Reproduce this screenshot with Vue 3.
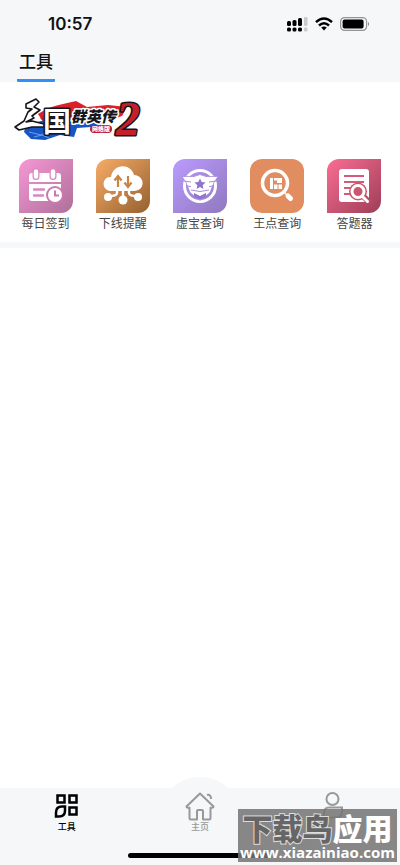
<script setup>
import { ref } from 'vue';

const tools = [
    { id: 'sign', label: '每日签到' },
    { id: 'cloud', label: '下线提醒' },
    { id: 'hero', label: '虚宝查询' },
    { id: 'point', label: '王点查询' },
    { id: 'quiz', label: '答题器' }
];

const tabs = [
    { id: 'tools', label: '工具' },
    { id: 'home', label: '主页' },
    { id: 'mine', label: '' }
];

const activeTab = ref('tools');
</script>

<template>
    <div class="page">
        <header class="header">
            <div class="status">
                <span class="status__time">10:57</span>
                <div class="status__icons">
                    <svg width="21" height="15" viewBox="0 0 21 15">
                        <g fill="#000">
                            <rect x="0" y="4" width="4" height="5" rx="1.5" />
                            <rect x="5.5" y="3" width="4" height="6" rx="1.5" />
                            <rect x="11" y="1" width="4" height="8" rx="1.5" />
                            <rect x="0" y="10.5" width="4" height="4" rx="1.5" />
                            <rect x="5.5" y="10.5" width="4" height="4" rx="1.5" />
                            <rect x="11" y="10.5" width="4" height="4" rx="1.5" />
                        </g>
                        <g fill="#c8cacb">
                            <rect x="17" y="0" width="3.5" height="9" rx="1.2" />
                            <rect x="17" y="10.5" width="3.5" height="4" rx="1.2" />
                        </g>
                    </svg>
                    <svg width="18" height="14" viewBox="0 0 18 14" fill="none" stroke="#000" stroke-width="2.5">
                        <path d="M1 5.2Q9-2.2 17 5.2" />
                        <path d="M4 8.5Q9 4 14 8.5" />
                        <path d="M6.2 10.6Q9 8.4 11.8 10.6L9 13.4Z" fill="#000" stroke="none" />
                    </svg>
                    <svg width="30" height="14" viewBox="0 0 30 14">
                        <rect x=".6" y=".6" width="26" height="12.8" rx="4" fill="none" stroke="#939596" stroke-width="1.2" />
                        <rect x="2.6" y="2.5" width="21" height="9" rx="2" />
                        <path d="M28 5Q30 7 28 9Z" fill="#777" />
                    </svg>
                </div>
            </div>
            <h1 class="title">工具</h1>
        </header>

        <main class="main">
            <section class="panel">
                <svg class="logo" viewBox="0 0 130 46" role="img" aria-label="三国群英传2">
                    <path d="M24 18Q36 10 49 8L62 5 73 11 94 9 113 11 108 20 96 24 82 22 70 29 58 24 42 22 30 27Z" fill="#dc2029" />
                    <path d="M12 29L31 24 60 26 83 23 91 27 77 31 63 32 60 41 46 39 31 44 17 43 10 36Z" fill="#1755c6" />
                    <path d="M26 22L35 17 45 19 30 26ZM64 11l16 5 12-5-8 10-14-1Z" fill="#a81b2d" opacity=".7" />
                    <path d="M15 36l12 3 7-3M20 41l8-2 7 3M63 28l13-4" fill="none" stroke="#6aa0ed" />
                    <path
                        d="M12 8L22 3 25 6 20 11 26 14 18 20 20 22 12 26 18 25 30 28 30 31 18 31 5 34 1 31 10 25 14 16 18 13 12 12Z"
                        fill="#fff"
                        stroke="#15151a"
                        stroke-width="1.600"
                        stroke-linejoin="round"
                    />
                    <rect x="76" y="29" width="22" height="8" rx="4" fill="#bd1d2b" />
                    <g stroke-linejoin="round">
                        <text class="logo__guo" x="29" y="36">国</text>
                        <text class="logo__small" x="57" y="26">群</text>
                        <text class="logo__small" x="72" y="26">英</text>
                        <text class="logo__small" x="87" y="26">传</text>
                        <text class="logo__two" x="102" y="39">2</text>
                    </g>
                    <text class="logo__badge" x="87" y="35">网络版</text>
                </svg>

                <nav class="tools">
                    <button v-for="tool in tools" :key="tool.id" class="tool" type="button">
                        <span class="tool__icon" :class="`tool__icon--${tool.id}`">
                            <svg v-if="tool.id === 'sign'" viewBox="0 0 54 54">
                                <path d="M13 14h26q3 0 3 3v6H10v-6q0-3 3-3ZM10 25h32v14q0 3-3 3H13q-3 0-3-3Z" fill="#fff" />
                                <g stroke="#d987be" stroke-linecap="round" fill="none">
                                    <path d="M17 12.500v5M34 12.500v5" stroke-width="7" />
                                    <path d="M17 12.500v5M34 12.500v5" stroke="#fff" stroke-width="4.500" />
                                    <path d="M15 30.500h10M15 36.500h9" stroke-width="2.400" />
                                </g>
                                <circle cx="36" cy="36" r="9" fill="#c979ad" />
                                <circle cx="36" cy="36" r="7" fill="#fff" />
                                <path d="M36 31.500v5h4" fill="none" stroke="#c979ad" stroke-width="2" />
                            </svg>
                            <svg v-else-if="tool.id === 'cloud'" viewBox="0 0 54 54">
                                <path d="M16 32C4 32 6 17 15 18C17 4 35 4 38 16C50 17 49 32 38 32Z" fill="#fff" />
                                <path d="M22 28V18M18.500 21.500L22 17l3.500 4.500M32 17v10M28.500 23.500L32 28l3.500-4.500" fill="none" stroke="#c98344" stroke-width="2.200" />
                                <path d="M21 31v3q0 3-8 3M27 31v10M33 31v3q0 3 8 3" fill="none" stroke="#fff" stroke-width="2.400" />
                                <g fill="#fff">
                                    <circle cx="12" cy="38" r="4" />
                                    <circle cx="27" cy="41" r="4.500" />
                                    <circle cx="42" cy="38" r="4" />
                                </g>
                            </svg>
                            <svg v-else-if="tool.id === 'hero'" viewBox="0 0 54 54">
                                <circle cx="27" cy="27" r="15.500" fill="none" stroke="#fff" stroke-width="3" />
                                <path d="M9 17.500h12l6-2 6 2h12l-4 6-2 5-2 5-10 8-10-8-2-5-2-5Z" fill="#fff" stroke="#a68bdf" stroke-width=".8" />
                                <path d="M27 19.500l1.700 3.500 3.800.500-2.800 2.700.700 3.800-3.400-1.900-3.400 1.900.700-3.800-2.800-2.700 3.800-.500Z" fill="#8e74d0" />
                                <path d="M11 22l7 1M13 27l5 .500M43 22l-7 1M41 27l-5 .500M18 31q9 3 18 0" fill="none" stroke="#a68bdf" />
                                <path d="M21 34l6 3 6-3v3.500l-6 3.500-6-3.500Z" fill="#9275cc" />
                            </svg>
                            <svg v-else-if="tool.id === 'point'" viewBox="0 0 54 54">
                                <circle cx="25" cy="24" r="12.500" fill="none" stroke="#fff" stroke-width="3.500" />
                                <path d="M34 33l3 3" stroke="#fff" stroke-width="1.500" />
                                <path d="M38 37l2.500 2.500" stroke="#fff" stroke-width="5" stroke-linecap="round" />
                                <path d="M20 19h3v11h-3ZM24 19h8v5h-8ZM24 25.500h3.500V30H24ZM28.500 25.500H32V30h-3.500Z" fill="#fff" />
                                <path d="M24 21.500h3v3h-3Z" fill="#e18d5f" />
                            </svg>
                            <svg v-else viewBox="0 0 54 54">
                                <rect x="12" y="10" width="30" height="33" rx="3" fill="#fff" />
                                <path d="M17 17h20M17 23h20M17 29h7M17 35h6" stroke="#d35a78" stroke-width="2.200" />
                                <path d="M36 37l7 7" stroke="#bd4a67" stroke-width="6" />
                                <circle cx="31" cy="32.500" r="9" fill="#c95571" />
                                <circle cx="31" cy="32.500" r="6" fill="none" stroke="#fff" stroke-width="3" />
                                <path d="M35 37l5.500 5.500" stroke="#fff" stroke-width="3" stroke-linecap="round" />
                            </svg>
                        </span>
                        <span class="tool__label">{{ tool.label }}</span>
                    </button>
                </nav>
            </section>
        </main>

        <nav class="tabbar">
            <button
                v-for="tab in tabs"
                :key="tab.id"
                class="tab"
                :class="[`tab--${tab.id}`, { 'tab--active': activeTab === tab.id }]"
                type="button"
                :aria-label="tab.label || tab.id"
                @click="activeTab = tab.id"
            >
                <svg v-if="tab.id === 'tools'" class="tab__icon" viewBox="0 0 30 30" fill="none" stroke="currentColor" stroke-width="2.500">
                    <path d="M5.500 4.500h7v7h-7ZM17.500 4.500h7v7h-7ZM17.500 16.500h7v7h-7Z" />
                    <path d="M13 15.500v4q0 6-6 6H4v-4q0-6 6-6Z" />
                </svg>
                <svg v-else-if="tab.id === 'home'" class="tab__icon" viewBox="0 0 30 30" fill="none" stroke="currentColor" stroke-width="2" stroke-linejoin="round">
                    <path d="M15 2.500L1.500 15.500q0 1.500 3 1.200V27q0 1.500 1.500 1.500h6V20q0-1 1-1h4q1 0 1 1v8.500h6q1.500 0 1.500-1.500V16.700q3 .3 3-1.200Z" />
                    <path d="M22 4q4-1 4 4" />
                </svg>
                <svg v-else class="tab__icon" viewBox="0 0 30 30" fill="none" stroke="currentColor" stroke-width="2">
                    <circle cx="14.500" cy="8" r="6" />
                    <path d="M11 16.500h13v4q0 6-6 6H6v-4q0-6 5-6Z" />
                </svg>
                <span v-if="tab.label" class="tab__label">{{ tab.label }}</span>
            </button>
            <span class="home-indicator"></span>
        </nav>

        <div class="watermark">
            <div class="watermark__name"><span class="watermark__dark">下载鸟</span>应用</div>
            <div class="watermark__url">www.xiazainiao.com</div>
        </div>
    </div>
</template>

<style>
body {
    background: #fff;
}
</style>

<style scoped>
.page {
    position: relative;
    display: flex;
    flex-direction: column;
    min-height: 100vh;
    font-family: Inter, 'Noto Sans CJK SC', sans-serif;
    color: #111;
}

button {
    padding: 0;
    border: none;
    background: none;
    font-family: inherit;
    color: inherit;
    cursor: pointer;
}

.header {
    background: #f5f7f9;
}
.status {
    display: flex;
    justify-content: space-between;
    align-items: center;
    height: 48px;
    padding: 0 30px 0 48px;
}
.status__time {
    font-size: 17px;
    font-weight: 600;
}
.status__icons {
    display: flex;
    align-items: center;
    gap: 7px;
}
.title {
    display: inline-block;
    margin: 0 0 0 17px;
    padding: 0 2px 3px;
    border-bottom: 3px solid #3090f8;
    border-radius: 1px;
    font-size: 17px;
    font-weight: 500;
    line-height: 28px;
    vertical-align: top;
}

.main {
    flex: 1;
}
.panel {
    padding: 14px 7px 9px;
    border-bottom: 6px solid #f6f8fa;
}
.logo {
    display: block;
    width: 130px;
    height: 46px;
    margin-left: 7px;
    overflow: visible;
}
.logo text {
    font-family: 'Noto Sans CJK SC', sans-serif;
    font-weight: 900;
    paint-order: stroke;
    stroke: #15151a;
    fill: #fff;
}
.logo .logo__guo {
    font-size: 28px;
    font-weight: 700;
    stroke-width: 3px;
}
.logo .logo__small {
    font-size: 15px;
    font-style: italic;
    fill: #15151a;
    stroke: #fff;
    stroke-width: 3px;
}
.logo .logo__two {
    font-family: 'Liberation Serif', serif;
    font-size: 48px;
    font-style: italic;
    fill: #c4202b;
    stroke: #15151a;
    stroke-width: 3px;
}
.logo .logo__badge {
    font-size: 6px;
    text-anchor: middle;
    stroke: none;
}

.tools {
    display: grid;
    grid-template-columns: repeat(5, 1fr);
    margin-top: 17px;
}
.tool {
    display: flex;
    flex-direction: column;
    align-items: center;
    gap: 2px;
}
.tool__icon {
    width: 54px;
    height: 54px;
    overflow: hidden;
    border-radius: 12px 0;
}
.tool__icon svg {
    display: block;
}
.tool__icon--sign {
    background: linear-gradient(135deg, #f797d5, #ad7099);
}
.tool__icon--cloud {
    background: linear-gradient(135deg, #f8ac67, #95602f);
}
.tool__icon--hero {
    background: linear-gradient(135deg, #ba9bff, #9078bd);
}
.tool__icon--point {
    border-radius: 12px;
    background: #e18d5f;
}
.tool__icon--quiz {
    background: linear-gradient(135deg, #fa6d93, #9d3e57);
}
.tool__label {
    font-size: 12px;
    line-height: 18px;
    color: #444;
}

.tabbar {
    position: relative;
    display: grid;
    grid-template-columns: repeat(3, 1fr);
    height: 77px;
    background: #f5f7f9;
}
.tab {
    display: flex;
    flex-direction: column;
    align-items: center;
    padding-top: 3px;
    color: #999;
}
.tab--active {
    color: #000;
}
/* raised arc behind the middle tab */
.tab--home::before {
    content: '';
    position: absolute;
    top: -11px;
    left: 50%;
    width: 82px;
    height: 82px;
    border-radius: 50%;
    background: #f5f7f9;
    transform: translateX(-50%);
}
.tab__icon {
    position: relative;
    width: 30px;
    height: 30px;
}
.tab__label {
    position: relative;
    font-size: 9px;
    font-weight: 500;
    line-height: 12px;
}
.home-indicator {
    position: absolute;
    bottom: 7px;
    left: 50%;
    width: 36%;
    height: 5px;
    border-radius: 3px;
    background: #000;
    transform: translateX(-50%);
}

.watermark {
    position: absolute;
    right: 3px;
    bottom: 3px;
    width: 159px;
    height: 53px;
    background: rgba(117, 117, 117, 0.86);
    color: #fff;
    text-align: center;
    white-space: nowrap;
}
.watermark__name {
    font-family: 'Noto Sans CJK SC', sans-serif;
    font-size: 30px;
    font-weight: 900;
    line-height: 36px;
}
.watermark__dark {
    color: #666;
    -webkit-text-stroke: 2px #ddd;
    paint-order: stroke;
}
.watermark__url {
    font-family: 'Open Sans', sans-serif;
    font-size: 15px;
    font-weight: 700;
    line-height: 14px;
}
</style>
